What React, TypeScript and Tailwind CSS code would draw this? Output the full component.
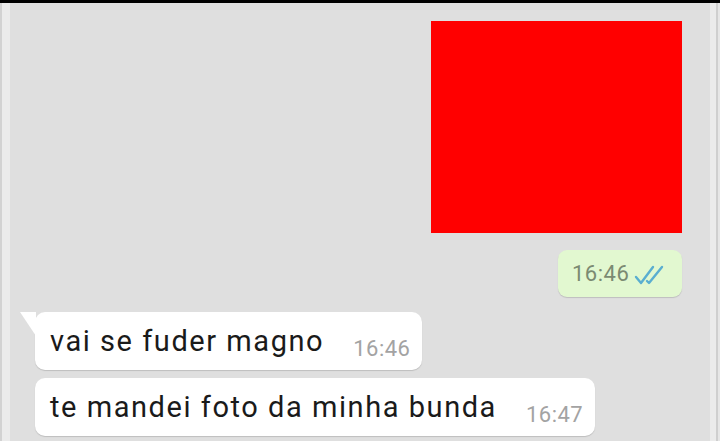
import React from 'react';

function DoubleCheck() {
  return (
    <svg width="32" height="22" viewBox="0 0 32 22" fill="none" stroke="#5aaed0" strokeWidth="2.4" strokeLinecap="round" strokeLinejoin="round">
      <path d="M2 13 L7 19 L19 3" />
      <path d="M13 17 L15 19 L28 3" />
    </svg>
  );
}

function Incoming({ text, time, tail }: { text: string; time: string; tail?: boolean }) {
  return (
    <div className="relative self-start ml-[25px] flex h-[58px] items-end rounded-[10px] bg-white pl-[15px] pr-[12px] shadow-[0_1px_1px_rgba(0,0,0,0.15)]">
      {tail && (
        <svg className="absolute left-[-15px] top-0" width="16" height="24" viewBox="0 0 16 24">
          <path d="M0 0 H16 V24 Z" fill="#ffffff" />
        </svg>
      )}
      <span className="mb-[13px] text-[29px] leading-[32px] tracking-[1.55px] text-[#1a1a1a]">{text}</span>
      <span className="ml-[29px] mb-[9px] text-[22px] leading-[24px] tracking-[0.5px] text-[#a3a3a3]">{time}</span>
    </div>
  );
}

export default function App() {
  return (
    <div className="flex h-[441px] w-[720px] overflow-hidden border-t-[3px] border-black bg-[#dfdfdf]" style={{ fontFamily: 'Roboto, "Noto Sans", sans-serif' }}>
      <div className="flex w-[10px] shrink-0">
        <div className="w-[2px] bg-[#d2d2d2]" />
        <div className="w-[8px] bg-[#ebebeb]" />
      </div>
      <div className="flex flex-1 flex-col pr-[28px]">
        <div className="mt-[18px] h-[212px] w-[251px] self-end bg-[#ff0000]" />
        <div className="mt-[17px] flex h-[47px] w-[124px] items-center self-end rounded-[9px] bg-[#e2f8d0] pl-[14px] shadow-[0_1px_1px_rgba(0,0,0,0.15)]">
          <span className="text-[22px] leading-[24px] tracking-[0.5px] text-[#7b8a72]">16:46</span>
          <span className="ml-[5px] mt-[2px]"><DoubleCheck /></span>
        </div>
        <div className="mt-[15px] flex flex-col gap-[8px]">
          <Incoming text="vai se fuder magno" time="16:46" tail />
          <Incoming text="te mandei foto da minha bunda" time="16:47" />
        </div>
      </div>
      <div className="flex w-[10px] shrink-0">
        <div className="w-[6px] bg-[#ebebeb]" />
        <div className="w-[2px] bg-[#cfcfcf]" />
        <div className="w-[2px] bg-[#e6e6e6]" />
      </div>
    </div>
  );
}
